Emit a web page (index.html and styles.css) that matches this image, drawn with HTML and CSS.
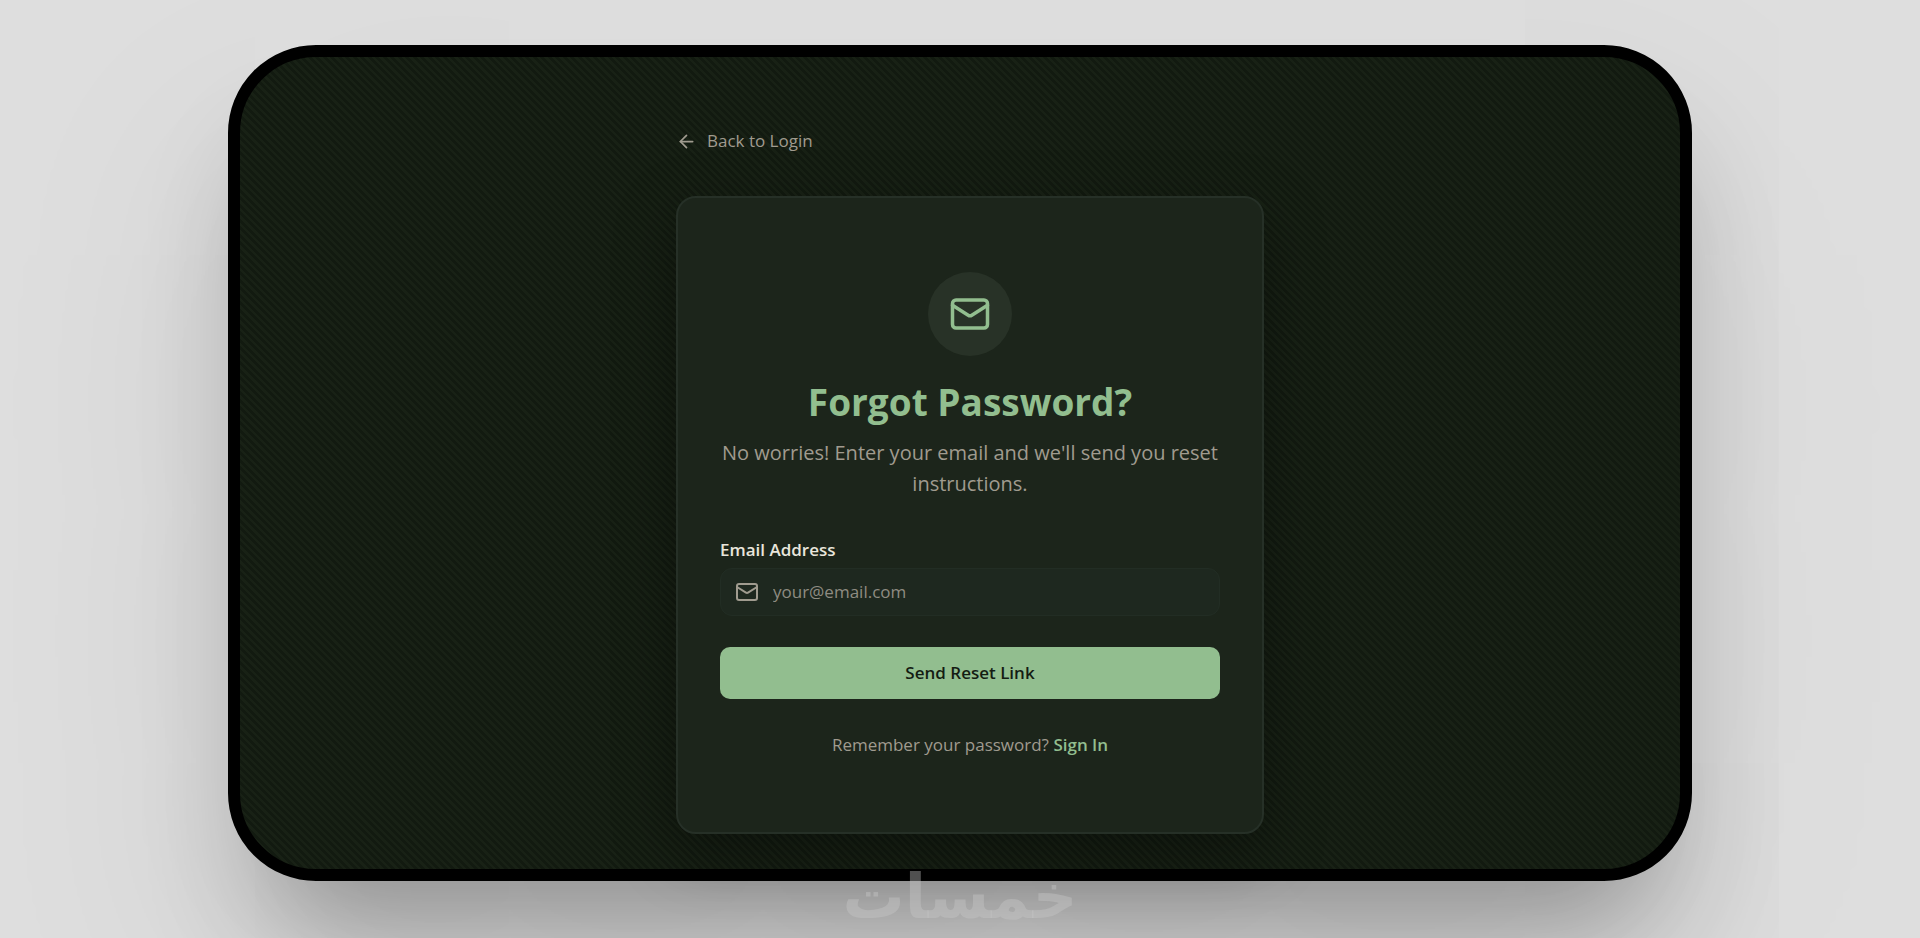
FILE: index.html
```html
<!DOCTYPE html>
<html lang="en">
<head>
    <meta charset="UTF-8">
    <meta name="viewport" content="width=device-width, initial-scale=1.0">
    <title>Forgot Password</title>
    <link rel="stylesheet" href="styles.css">
</head>
<body>

    <div class="device">
        <main class="reset">
            <a href="#" class="back-link">
                <svg class="back-icon" viewBox="0 0 24 24" aria-hidden="true">
                    <path d="m12 19-7-7 7-7"/>
                    <path d="M19 12H5"/>
                </svg>
                Back to Login
            </a>

            <div class="card">
                <div class="badge">
                    <svg class="badge-icon" viewBox="0 0 24 24" aria-hidden="true">
                        <rect x="2" y="4" width="20" height="16" rx="2"/>
                        <path d="m22 7-8.97 5.7a1.94 1.94 0 0 1-2.06 0L2 7"/>
                    </svg>
                </div>

                <h1>Forgot Password?</h1>
                <p class="intro">No worries! Enter your email and we'll send you reset instructions.</p>

                <form class="form">
                    <label for="email">Email Address</label>
                    <div class="field">
                        <svg class="field-icon" viewBox="0 0 24 24" aria-hidden="true">
                            <rect x="2" y="4" width="20" height="16" rx="2"/>
                            <path d="m22 7-8.97 5.7a1.94 1.94 0 0 1-2.06 0L2 7"/>
                        </svg>
                        <input type="email" id="email" class="input-field" placeholder="your@email.com">
                    </div>
                    <button type="submit" class="btn">Send Reset Link</button>
                </form>

                <p class="signin">Remember your password? <a href="#">Sign In</a></p>
            </div>
        </main>
    </div>

    <div class="watermark" lang="ar" dir="rtl">خمسات</div>

</body>
</html>
```

FILE: styles.css
```css
* {
    box-sizing: border-box;
}

body {
    margin: 0;
    padding: 45px 228px 57px;
    min-height: 100vh;
    position: relative;
    overflow: hidden;
    background-color: #dedede;
    color: #a09b8f;
    font-family: "Segoe UI", "Open Sans", "Noto Sans", sans-serif;
    font-size: 17px;
    line-height: 26px;
}

.device {
    border: 12px solid #000;
    border-radius: 88px;
    padding: 71px 0 35px 20px;
    background-color: #151d12;
    background-image: repeating-linear-gradient(45deg, #121a10 0, #121a10 12.5%, #182115 12.5%, #182115 25%);
    background-size: 15px 15px;
    box-shadow: 0 80px 120px -40px rgba(0, 0, 0, 0.32), 0 100px 250px rgba(0, 0, 0, 0.1);
}

.reset {
    max-width: 588px;
    margin: 0 auto;
}

.back-link {
    display: inline-flex;
    align-items: center;
    gap: 10px;
    margin-bottom: 42px;
    color: #a09b8f;
    text-decoration: none;
}

svg {
    fill: none;
    stroke: currentColor;
    stroke-width: 2;
    stroke-linecap: round;
    stroke-linejoin: round;
}

.back-icon {
    width: 21px;
    height: 21px;
}

.card {
    padding: 74px 42px;
    border: 2px solid #263027;
    border-radius: 20px;
    background-color: #1c251b;
    box-shadow: 0 20px 60px rgba(0, 0, 0, 0.35);
    text-align: center;
}

.badge {
    display: flex;
    align-items: center;
    justify-content: center;
    width: 84px;
    height: 84px;
    margin: 0 auto 21px;
    border-radius: 50%;
    background-color: #283227;
    color: #92be8f;
}

.badge-icon {
    width: 42px;
    height: 42px;
}

h1 {
    margin: 0 0 10px;
    color: #92be8f;
    font-size: 37px;
    line-height: 50px;
    font-weight: 700;
}

.intro {
    margin: 0 0 38px;
    font-size: 20px;
    line-height: 31px;
}

.form {
    text-align: left;
}

label {
    display: block;
    margin-bottom: 5px;
    color: #e9e6dc;
    font-weight: 600;
}

.field {
    display: flex;
    align-items: center;
    gap: 14px;
    height: 48px;
    margin-bottom: 31px;
    padding: 0 14px;
    border: 1px solid #222d24;
    border-radius: 12px;
    background-color: #1e281f;
}

.field-icon {
    flex: none;
    width: 24px;
    height: 24px;
}

.input-field {
    flex: 1;
    min-width: 0;
    padding: 0;
    border: none;
    outline: none;
    background: none;
    color: #e9e6dc;
    font: inherit;
}

.input-field::placeholder {
    color: #8f8c82;
    opacity: 1;
}

.btn {
    display: block;
    width: 100%;
    height: 52px;
    border: none;
    border-radius: 10px;
    background-color: #92be8f;
    color: #141c13;
    font: inherit;
    font-weight: 600;
    cursor: pointer;
}

.signin {
    margin: 33px 0 0;
}

.signin a {
    color: #92be8f;
    font-weight: 600;
    text-decoration: none;
}

.watermark {
    position: absolute;
    bottom: 10px;
    left: 0;
    right: 0;
    color: rgba(200, 200, 200, 0.4);
    font-family: "DejaVu Sans", sans-serif;
    font-size: 62px;
    line-height: 62px;
    font-weight: 700;
    text-align: center;
    pointer-events: none;
}
```
